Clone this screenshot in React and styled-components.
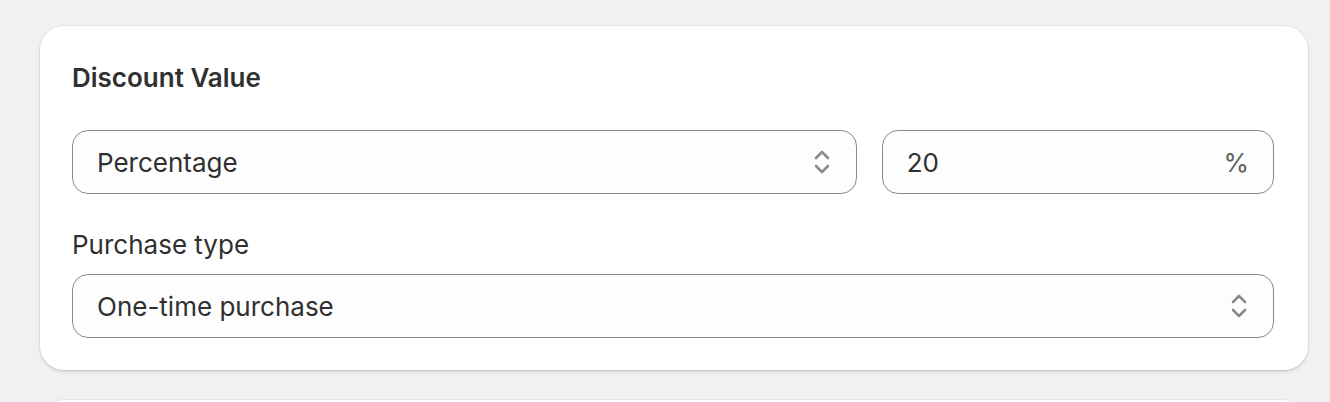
import styled, { createGlobalStyle } from "styled-components";

const GlobalStyle = createGlobalStyle`
  html, body {
    margin: 0;
    padding: 0;
    background: #f1f1f1;
  }
  body {
    font-family: Inter, "Noto Sans", sans-serif;
    color: #303030;
  }
`;

const Page = styled.div`
  padding: 26px 22px 0 40px;
  height: 402px;
  overflow: hidden;
  box-sizing: border-box;
`;

const Card = styled.section`
  background: #fff;
  border-radius: 24px;
  padding: 32px 34px 32px 32px;
  box-shadow: 0 0 0 1px rgba(0, 0, 0, 0.045), 0 2px 3px rgba(0, 0, 0, 0.13);
  margin-bottom: 30px;
  min-height: ${(p) => (p.$empty ? "200px" : "auto")};
`;

const Title = styled.h2`
  margin: 0 0 32px;
  font-size: 26px;
  line-height: 40px;
  font-weight: 600;
  color: #303030;
`;

const Row = styled.div`
  display: grid;
  grid-template-columns: 2fr 1fr;
  gap: 25px;
  margin-bottom: 33px;
`;

const Label = styled.label`
  display: block;
  font-size: 26px;
  line-height: 36px;
  margin-bottom: 11px;
  color: #303030;
`;

const Field = styled.div`
  height: 64px;
  box-sizing: border-box;
  display: flex;
  align-items: center;
  justify-content: space-between;
  padding: 0 24px 0 24px;
  border: 1px solid #8a8a8a;
  border-radius: 16px;
  background: #fdfdfd;
  font-size: 26px;
  color: #303030;
`;

const Suffix = styled.span`
  color: #616161;
  font-size: 26px;
`;

const Chevrons = () => (
  <svg width="20" height="28" viewBox="0 0 20 28" fill="none">
    <path d="M4 10 L10 4 L16 10" stroke="#8a8a8a" strokeWidth="2.6" strokeLinecap="round" strokeLinejoin="round" />
    <path d="M4 18 L10 24 L16 18" stroke="#8a8a8a" strokeWidth="2.6" strokeLinecap="round" strokeLinejoin="round" />
  </svg>
);

export default function App() {
  return (
    <>
      <GlobalStyle />
      <Page>
        <Card>
          <Title>Discount Value</Title>
          <Row>
            <Field>
              <span>Percentage</span>
              <Chevrons />
            </Field>
            <Field>
              <span>20</span>
              <Suffix>%</Suffix>
            </Field>
          </Row>
          <Label>Purchase type</Label>
          <Field>
            <span>One-time purchase</span>
            <Chevrons />
          </Field>
        </Card>
        <Card $empty />
      </Page>
    </>
  );
}
